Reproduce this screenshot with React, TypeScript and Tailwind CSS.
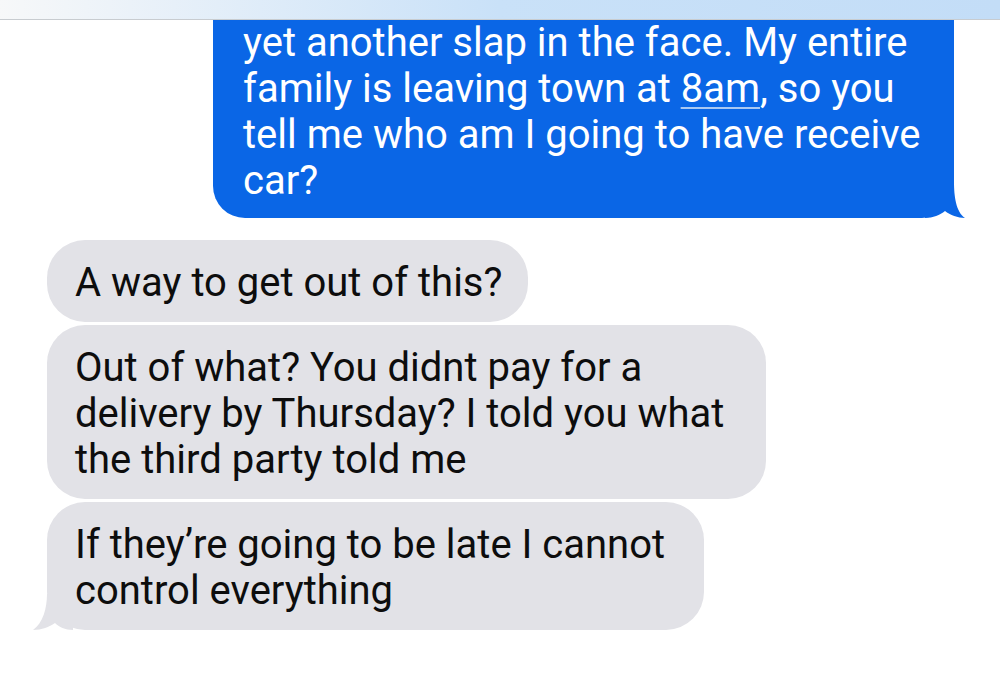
const font = { fontFamily: "Roboto, 'Liberation Sans', sans-serif" };

function BlueTail() {
  return (
    <svg
      className="absolute right-[-11px] bottom-0"
      width="40"
      height="36"
      viewBox="0 0 40 36"
    >
      <path
        d="M0 36 L0 0 L29 0 C29 14 31 30 40 36 C33 36 25 33 20 29 C15 33 8 36 0 36 Z"
        fill="#0a66e6"
      />
    </svg>
  );
}

function GrayTail() {
  return (
    <svg
      className="absolute left-[-14px] bottom-0"
      width="40"
      height="36"
      viewBox="0 0 40 36"
    >
      <path
        d="M40 36 L40 0 L14 0 C14 14 10 29 0 36 C9 36 16 33 22 29 C26 33 32 36 40 36 Z"
        fill="#e2e2e7"
      />
    </svg>
  );
}

function GrayBubble({
  width,
  lines,
  tail,
}: {
  width: number;
  lines: string[];
  tail?: boolean;
}) {
  return (
    <div
      className="relative bg-[#e2e2e7] rounded-[38px] px-[28px] pt-[20px] pb-[16px] text-[40px] leading-[46px] text-[#0d0d0d]"
      style={{ width }}
    >
      {lines.map((l) => (
        <div key={l} className="whitespace-nowrap">
          {l}
        </div>
      ))}
      {tail && <GrayTail />}
    </div>
  );
}

export default function App() {
  return (
    <div className="w-[1000px] h-[682px] bg-white overflow-hidden" style={font}>
      <div className="h-[20px] bg-gradient-to-r from-[#f7f8f9] via-[#c9e1f8] to-[#c3ddf7] border-b border-[#c8ccd0]" />

      <div className="pl-[213px]">
        <div className="relative w-[741px] bg-[#0a66e6] rounded-b-[32px] pl-[30px] pb-[14px] text-[40px] leading-[46px] text-white">
          <div className="whitespace-nowrap">yet another slap in the face. My entire</div>
          <div className="whitespace-nowrap">
            family is leaving town at{" "}
            <span className="underline decoration-[#a9c8f3] decoration-[2px] underline-offset-[5px]">
              8am
            </span>
            , so you
          </div>
          <div className="whitespace-nowrap">tell me who am I going to have receive</div>
          <div className="whitespace-nowrap">car?</div>
          <BlueTail />
        </div>
      </div>

      <div className="flex flex-col gap-[3px] pl-[47px] pt-[22px]">
        <GrayBubble width={481} lines={["A way to get out of this?"]} />
        <GrayBubble
          width={719}
          lines={[
            "Out of what? You didnt pay for a",
            "delivery by Thursday? I told you what",
            "the third party told me",
          ]}
        />
        <GrayBubble
          width={657}
          lines={["If they\u2019re going to be late I cannot", "control everything"]}
          tail
        />
      </div>
    </div>
  );
}
